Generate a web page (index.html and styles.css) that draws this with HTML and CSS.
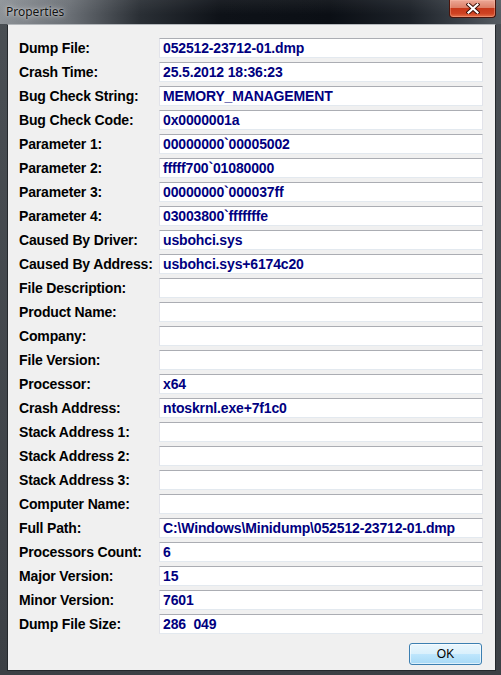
FILE: index.html
```html
<!DOCTYPE html>
<html lang="en">
<head>
    <meta charset="UTF-8">
    <meta name="viewport" content="width=device-width, initial-scale=1.0">
    <title>Properties</title>
    <link rel="stylesheet" href="styles.css">
</head>
<body>
    <div class="window">
        <div class="titlebar">
            <span class="title">Properties</span>
            <button class="close" title="Close">
                <svg width="14" height="11" viewBox="0 0 14 11">
                    <path d="M2.5 1.5L11.5 9.5M11.5 1.5L2.5 9.5" stroke="#3a0d05" stroke-width="4" stroke-linecap="square"/>
                    <path d="M2.5 1.5L11.5 9.5M11.5 1.5L2.5 9.5" stroke="#fff" stroke-width="2.2" stroke-linecap="square"/>
                </svg>
            </button>
        </div>

        <div class="client">
            <div class="props" id="props"></div>

            <div class="actions">
                <button class="btn-ok">OK</button>
            </div>
        </div>
    </div>

    <script>
        const props = [
            ["Dump File:", "052512-23712-01.dmp"],
            ["Crash Time:", "25.5.2012 18:36:23"],
            ["Bug Check String:", "MEMORY_MANAGEMENT"],
            ["Bug Check Code:", "0x0000001a"],
            ["Parameter 1:", "00000000`00005002"],
            ["Parameter 2:", "fffff700`01080000"],
            ["Parameter 3:", "00000000`000037ff"],
            ["Parameter 4:", "03003800`fffffffe"],
            ["Caused By Driver:", "usbohci.sys"],
            ["Caused By Address:", "usbohci.sys+6174c20"],
            ["File Description:", ""],
            ["Product Name:", ""],
            ["Company:", ""],
            ["File Version:", ""],
            ["Processor:", "x64"],
            ["Crash Address:", "ntoskrnl.exe+7f1c0"],
            ["Stack Address 1:", ""],
            ["Stack Address 2:", ""],
            ["Stack Address 3:", ""],
            ["Computer Name:", ""],
            ["Full Path:", "C:\\Windows\\Minidump\\052512-23712-01.dmp"],
            ["Processors Count:", "6"],
            ["Major Version:", "15"],
            ["Minor Version:", "7601"],
            ["Dump File Size:", "286  049"]
        ];

        const list = document.getElementById("props");
        props.forEach(([name, value]) => {
            const label = document.createElement("label");
            label.className = "prop-name";
            label.textContent = name;

            const field = document.createElement("div");
            field.className = "prop-value";
            field.textContent = value;

            list.appendChild(label);
            list.appendChild(field);
        });
    </script>
</body>
</html>
```

FILE: styles.css
```css
* {
    margin: 0;
    padding: 0;
    box-sizing: border-box;
}

body {
    width: 501px;
    height: 675px;
    overflow: hidden;
    background: #484d52;
    font-family: "Liberation Sans", Arial, sans-serif;
}

.window {
    display: flex;
    flex-direction: column;
    height: 675px;
    background: linear-gradient(to bottom, #4a4f54, #3c4045);
}

/* Aero caption */
.titlebar {
    height: 24px;
    flex: none;
    display: flex;
    align-items: flex-start;
    justify-content: space-between;
    background:
        linear-gradient(to bottom, rgba(255, 255, 255, 0.06), rgba(0, 0, 0, 0) 60%),
        linear-gradient(to right, #8d9297 0, #6a6f75 70px, #2a2f35 140px, #0e1218 220px, #0b0f15 330px, #1c2128 410px, #40464d 470px, #565c62 501px);
}

.title {
    margin: 4px 0 0 6px;
    font-family: "Noto Sans", "Open Sans", sans-serif;
    font-size: 12px;
    line-height: 15px;
    color: #111;
    text-shadow: 0 0 6px rgba(255, 255, 255, 0.8), 0 0 2px rgba(255, 255, 255, 0.6);
}

.close {
    width: 47px;
    height: 18px;
    margin-right: 5px;
    border: 1px solid #4a130a;
    border-top: none;
    border-radius: 0 0 4px 4px;
    background:
        linear-gradient(to bottom, #eca796 0, #dd8068 45%, #c8381a 50%, #cf4323 80%, #e6714a 100%);
    box-shadow: inset 0 0 0 1px rgba(255, 200, 180, 0.35);
    display: flex;
    align-items: center;
    justify-content: center;
    cursor: default;
}

.client {
    flex: 1;
    margin: 0 5px 4px 7px;
    border: 1px solid #24282c;
    border-top-color: #b4b8bc;
    background: #f0f0f0;
    padding: 13px 12px 0 11px;
    display: flex;
    flex-direction: column;
}

.props {
    display: grid;
    grid-template-columns: 140px 324px;
    grid-auto-rows: 20px;
    row-gap: 4px;
}

.prop-name,
.prop-value {
    font-size: 14px;
    font-weight: bold;
    letter-spacing: -0.15px;
    line-height: 18px;
    white-space: pre;
}

.prop-name {
    display: flex;
    align-items: center;
    color: #000;
}

.prop-value {
    background: #fff;
    border: 1px solid #e2e3ea;
    border-top-color: #abadb3;
    border-bottom-color: #e3e9ef;
    padding: 0 3px;
    color: #000080;
}

.actions {
    display: flex;
    justify-content: flex-end;
    margin-top: 9px;
    padding-right: 1px;
}

.btn-ok {
    width: 73px;
    height: 22px;
    border: 1px solid #3c7fb1;
    border-radius: 3px;
    background: linear-gradient(to bottom, #eaf6fd 0%, #d9f0fc 50%, #bee6fd 51%, #a7d9f5 100%);
    box-shadow: inset 0 0 0 1px rgba(255, 255, 255, 0.6);
    font-family: "Liberation Sans", Arial, sans-serif;
    font-size: 12px;
    color: #000;
}
```
